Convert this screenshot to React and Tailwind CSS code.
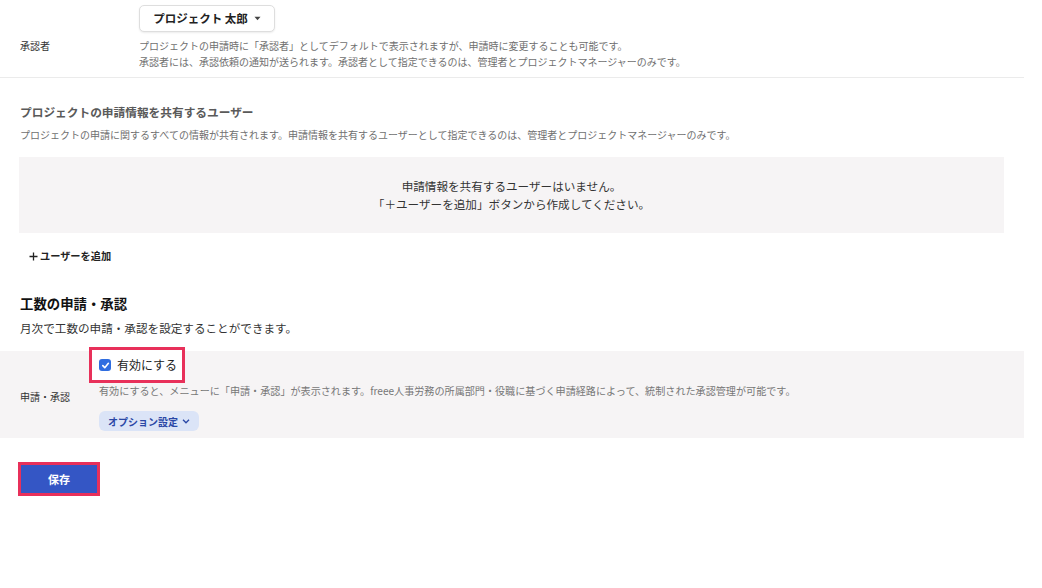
import React from "react";

const font = "font-['Noto_Sans_CJK_JP','Noto_Sans',sans-serif]";

function Check() {
  return (
    <span className="flex h-[12px] w-[12px] items-center justify-center rounded-[3px] bg-[#2f6de0]">
      <svg width="9" height="9" viewBox="0 0 10 10" fill="none">
        <path d="M2 5.2 L4.2 7.4 L8.2 2.6" stroke="white" strokeWidth="1.8" strokeLinecap="round" strokeLinejoin="round" />
      </svg>
    </span>
  );
}

export default function App() {
  return (
    <div className={`${font} w-[1042px] h-[588px] bg-white text-[#222]`}>
      <div className="w-[1024px]">
        {/* Approver row */}
        <div className="flex border-b border-[#ebebeb] pt-[5px] pb-[7px]">
          <div className="w-[139px] pl-[20px] pt-[33px] text-[10px] leading-[16px] text-[#333]">承認者</div>
          <div className="flex flex-col items-start">
            <button className="flex h-[27px] w-[136px] items-center justify-center gap-[6px] rounded-[5px] border border-[#dedede] bg-white text-[11.5px] font-bold text-[#222] shadow-[0_1px_2px_rgba(0,0,0,0.08)]">
              <span>プロジェクト 太郎</span>
              <svg width="7" height="5" viewBox="0 0 7 5"><path d="M0.5 0.8 L6.5 0.8 L3.5 4.3 Z" fill="#444" /></svg>
            </button>
            <p className="mt-[6px] text-[10px] leading-[16px] text-[#707070]">
              プロジェクトの申請時に「承認者」としてデフォルトで表示されますが、申請時に変更することも可能です。
              <br />
              承認者には、承認依頼の通知が送られます。承認者として指定できるのは、管理者とプロジェクトマネージャーのみです。
            </p>
          </div>
        </div>

        {/* Share users section */}
        <div className="px-[19px] pt-[25px]">
          <h2 className="pl-[1px] text-[11.7px] font-bold leading-[18px] text-[#5a5a5a]">プロジェクトの申請情報を共有するユーザー</h2>
          <p className="mt-[6px] pl-[1px] text-[10px] leading-[16px] text-[#707070]">
            プロジェクトの申請に関するすべての情報が共有されます。申請情報を共有するユーザーとして指定できるのは、管理者とプロジェクトマネージャーのみです。
          </p>
          <div className="mt-[14px] flex h-[76px] w-[985px] flex-col items-center justify-center bg-[#f6f4f5] text-[11.6px] leading-[18px] text-[#333]">
            <span>申請情報を共有するユーザーはいません。</span>
            <span>「＋ユーザーを追加」ボタンから作成してください。</span>
          </div>
          <button className="mt-[15px] flex h-[16px] items-center gap-[2px] pl-[10px] text-[10.2px] font-bold text-[#222]">
            <svg width="9" height="9" viewBox="0 0 9 9"><path d="M4.5 0.5 V8.5 M0.5 4.5 H8.5" stroke="#222" strokeWidth="1.3" /></svg>
            <span>ユーザーを追加</span>
          </button>

          <h2 className="mt-[29px] pl-[1px] text-[13.4px] font-bold leading-[20px] text-[#111]">工数の申請・承認</h2>
          <p className="mt-[7px] pl-[1px] text-[11.6px] leading-[16px] text-[#333]">月次で工数の申請・承認を設定することができます。</p>
        </div>

        {/* Band */}
        <div className="mt-[15px] flex h-[87px] bg-[#f6f4f5]">
          <div className="w-[99px] pl-[20px] pt-[38px] text-[10px] leading-[16px] text-[#333]">申請・承認</div>
          <div className="flex flex-col items-start">
            <label className="-ml-[10px] -mt-[4px] flex h-[36px] w-[96px] items-center gap-[6px] border-[3px] border-[#e8305a] bg-white pl-[7px] text-[12px] text-[#222]">
              <Check />
              <span>有効にする</span>
            </label>
            <p className="text-[10.1px] leading-[16px] text-[#777]">
              有効にすると、メニューに「申請・承認」が表示されます。freee人事労務の所属部門・役職に基づく申請経路によって、統制された承認管理が可能です。
            </p>
            <button className="mt-[12px] flex h-[20px] w-[100px] items-center justify-center gap-[4px] rounded-[6px] bg-[#dbe4f7] text-[10px] font-bold text-[#2a47a6]">
              <span>オプション設定</span>
              <svg width="8" height="5" viewBox="0 0 8 5" fill="none"><path d="M1 0.8 L4 3.8 L7 0.8" stroke="#2a47a6" strokeWidth="1.3" /></svg>
            </button>
          </div>
        </div>

        {/* Save */}
        <div className="pl-[18px] pt-[24px]">
          <div className="inline-flex border-[3px] border-[#e8305a]">
            <button className="flex h-[28px] w-[76px] items-center justify-center bg-[#3456c5] text-[11px] font-bold text-white">保存</button>
          </div>
        </div>
      </div>
    </div>
  );
}
